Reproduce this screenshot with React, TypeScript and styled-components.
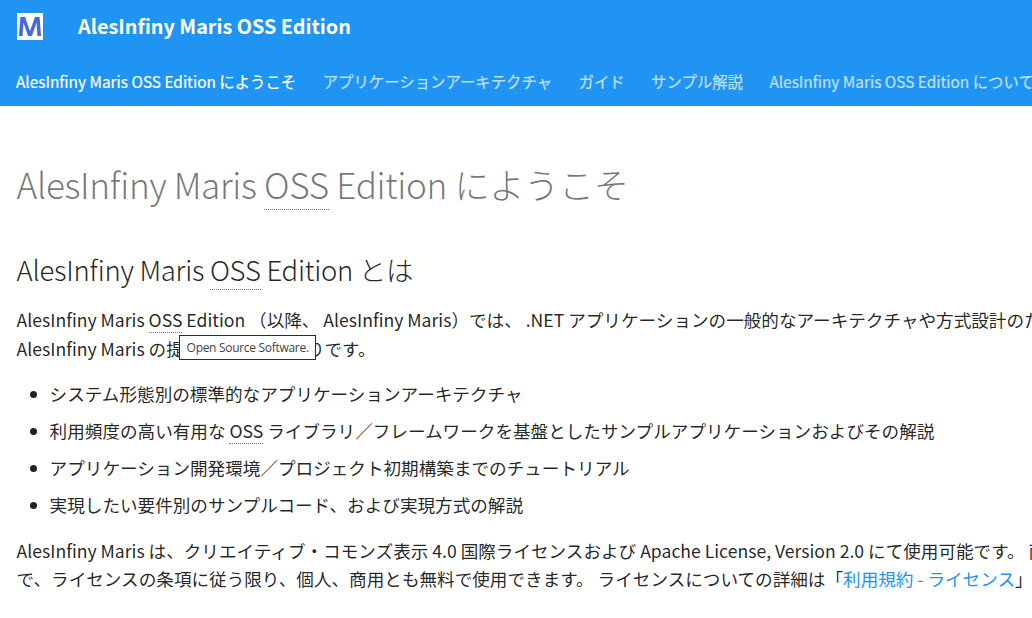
import React from "react";
import styled, { createGlobalStyle } from "styled-components";

const GlobalStyle = createGlobalStyle`
  *, *::before, *::after { box-sizing: border-box; }
  html { font-size: 22px; overflow: hidden; }
  body {
    margin: 0;
    background: #fff;
    color: rgba(0, 0, 0, 0.87);
    font-family: "Noto Sans CJK JP", "Noto Sans", sans-serif;
    font-feature-settings: "kern", "liga";
    -webkit-font-smoothing: antialiased;
  }
`;

const Page = styled.div`
  height: 618px;
  overflow: hidden;
  white-space: nowrap;
`;

const Header = styled.header`
  background: #2094f3;
  color: #fff;
`;

const TitleBar = styled.div`
  display: flex;
  align-items: center;
  height: 2.4rem;
  padding-left: 17px;
`;

const Logo = styled.svg`
  display: block;
  width: 26px;
  height: 27px;
  margin-right: 35px;
`;

const SiteTitle = styled.span`
  font-size: 0.9rem;
  font-weight: 700;
  line-height: 2.4rem;
`;

const Tabs = styled.nav`
  display: flex;
  gap: 1.2rem;
  height: 2.4rem;
  padding-left: 16px;
`;

const Tab = styled.a<{ $active?: boolean }>`
  flex: none;
  margin-top: 0.84rem;
  font-size: 0.7rem;
  font-weight: 400;
  line-height: 1.3;
  -webkit-text-stroke: 0.2px currentColor;
  opacity: ${(p) => (p.$active ? 1 : 0.7)};
`;

const Article = styled.main`
  padding: 55px 0 0 16.6px;
  font-size: 0.8rem;
  line-height: 1.6;
`;

const PageHeading = styled.h1`
  margin: 0 0 1.25em;
  color: rgba(0, 0, 0, 0.54);
  font-size: 2em;
  font-weight: 300;
  letter-spacing: -0.01em;
  line-height: 1.3;
`;

const SectionHeading = styled.h2`
  margin: 1.6em 0 0.64em;
  font-size: 1.5625em;
  font-weight: 300;
  letter-spacing: -0.01em;
  line-height: 1.4;
`;

const Paragraph = styled.p`
  margin: 1em 0;
`;

const Abbr = styled.abbr`
  border-bottom: 0.05rem dotted rgba(0, 0, 0, 0.54);
  text-decoration: none;
`;

const Anchor = styled.span`
  position: relative;
`;

const Tooltip = styled.span`
  position: absolute;
  top: 28px;
  left: 30px;
  width: 137px;
  height: 25px;
  padding-left: 7px;
  border: 1px solid #2b2b2b;
  background: #fff;
  color: #444;
  font: 12px/23px "Open Sans", sans-serif;
  letter-spacing: -0.3px;
`;

const List = styled.ul`
  margin: 1em 0 1em 0.625em;
  padding: 0;
`;

const Item = styled.li`
  margin: 0 0 0.5em 1.25em;
`;

const Link = styled.a`
  color: #1e90ff;
`;

const tabs = [
  "AlesInfiny Maris OSS Edition にようこそ",
  "アプリケーションアーキテクチャ",
  "ガイド",
  "サンプル解説",
  "AlesInfiny Maris OSS Edition について",
];

export default function App() {
  return (
    <Page lang="ja">
      <GlobalStyle />
      <Header>
        <TitleBar>
          <Logo viewBox="0 0 26 27">
            <rect width="26" height="27" fill="#fff" />
            <path d="M2 23L3.4 4H8L13 18L18 4H22.6L24 23H20.4L19.6 9.5L14.9 23H11.1L6.4 9.5L5.6 23Z" fill="#4468e0" />
          </Logo>
          <SiteTitle>AlesInfiny Maris OSS Edition</SiteTitle>
        </TitleBar>
        <Tabs>
          {tabs.map((label, i) => (
            <Tab key={label} $active={i === 0}>{label}</Tab>
          ))}
        </Tabs>
      </Header>
      <Article>
        <PageHeading>
          AlesInfiny Maris <Abbr>OSS</Abbr> Edition にようこそ
        </PageHeading>
        <SectionHeading>
          AlesInfiny Maris <Abbr>OSS</Abbr> Edition とは
        </SectionHeading>
        <Paragraph>
          AlesInfiny Maris{" "}
          <Anchor>
            <Abbr>OSS</Abbr>
            <Tooltip role="tooltip">Open Source Software.</Tooltip>
          </Anchor>{" "}
          Edition （以降、 AlesInfiny Maris）では、 .NET アプリケーションの一般的なアーキテクチャや方式設計のた
          <br />
          AlesInfiny Maris の提供物は以下の通りです。
        </Paragraph>
        <List>
          <Item>システム形態別の標準的なアプリケーションアーキテクチャ</Item>
          <Item>
            利用頻度の高い有用な <Abbr>OSS</Abbr> ライブラリ／フレームワークを基盤としたサンプルアプリケーションおよびその解説
          </Item>
          <Item>アプリケーション開発環境／プロジェクト初期構築までのチュートリアル</Item>
          <Item>実現したい要件別のサンプルコード、および実現方式の解説</Item>
        </List>
        <Paragraph>
          AlesInfiny Maris は、クリエイティブ・コモンズ表示 4.0 国際ライセンスおよび Apache License, Version 2.0 にて使用可能です。 両
          <br />
          で、ライセンスの条項に従う限り、個人、商用とも無料で使用できます。 ライセンスについての詳細は「<Link>利用規約 - ライセンス</Link>」
        </Paragraph>
      </Article>
    </Page>
  );
}
